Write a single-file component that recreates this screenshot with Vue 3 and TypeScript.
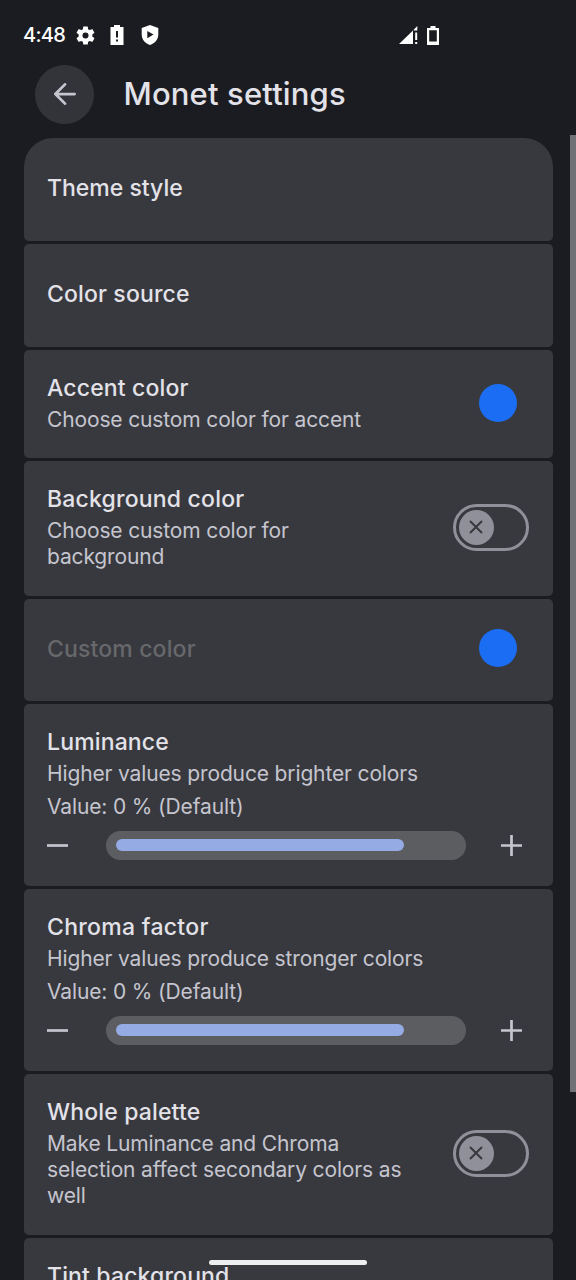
<script setup lang="ts">
type Kind = 'plain' | 'swatch' | 'toggle' | 'slider'

interface Setting {
  id: string
  title: string
  kind: Kind
  summary?: string[]
  value?: string
  level?: number
  disabled?: boolean
}

const settings: Setting[] = [
  { id: 'theme', title: 'Theme style', kind: 'plain' },
  { id: 'source', title: 'Color source', kind: 'plain' },
  { id: 'accent', title: 'Accent color', kind: 'swatch', summary: ['Choose custom color for accent'] },
  { id: 'background', title: 'Background color', kind: 'toggle', summary: ['Choose custom color for', 'background'] },
  { id: 'custom', title: 'Custom color', kind: 'swatch', disabled: true },
  { id: 'luminance', title: 'Luminance', kind: 'slider', summary: ['Higher values produce brighter colors'], value: 'Value: 0 % (Default)', level: 84.7 },
  { id: 'chroma', title: 'Chroma factor', kind: 'slider', summary: ['Higher values produce stronger colors'], value: 'Value: 0 % (Default)', level: 84.7 },
  { id: 'palette', title: 'Whole palette', kind: 'toggle', summary: ['Make Luminance and Chroma', 'selection affect secondary colors as', 'well'] },
  { id: 'tint', title: 'Tint background', kind: 'plain' },
]
</script>

<template>
  <div class="screen">
    <div class="status">
      <span class="clock">4:48</span>
      <svg class="gear" viewBox="2 2 20 20">
        <path fill-rule="evenodd" d="M19.14 12.94c.04-.3.06-.61.06-.94s-.02-.64-.07-.94l2.03-1.58a.49.49 0 0 0 .12-.61l-1.92-3.32a.49.49 0 0 0-.59-.22l-2.39.96a7 7 0 0 0-1.62-.94l-.36-2.54A.48.48 0 0 0 13.92 2.4h-3.84a.48.48 0 0 0-.48.41l-.36 2.54a7.4 7.4 0 0 0-1.62.94l-2.39-.96a.48.48 0 0 0-.59.22L2.72 8.87a.48.48 0 0 0 .12.61l2.03 1.58a6 6 0 0 0 0 1.88l-2.03 1.58a.49.49 0 0 0-.12.61l1.92 3.32c.12.22.37.29.59.22l2.39-.96c.5.38 1.03.7 1.62.94l.36 2.54c.05.24.24.41.48.41h3.84c.24 0 .44-.17.48-.41l.36-2.54a7 7 0 0 0 1.62-.94l2.39.96c.22.08.47 0 .59-.22l1.92-3.32a.48.48 0 0 0-.12-.61zM12 15.2a3.2 3.2 0 1 1 0-6.4 3.2 3.2 0 0 1 0 6.4z" />
      </svg>
      <svg class="alert" viewBox="0 0 14 20">
        <path fill-rule="evenodd" d="M4 0h6v2h3.500v18H.5V2H4zM6 6v6.500h2V6zM6 14.500v2h2v-2z" />
      </svg>
      <svg class="shield" viewBox="0 0 18 20">
        <path fill-rule="evenodd" d="M9 0l8.300 3v6.500c0 5-3.300 8.800-8.300 10.500C4 18.300.7 14.500.7 9.500V3zM6.300 6v7.200L12.500 9.600z" />
      </svg>
      <svg class="signal" viewBox="0 0 19 19">
        <path d="M0 18L14 4.500V18zM14.700 4.500V3.700L18.300 0v4.500zM16.200 6.500h2v7.500h-2zM16.200 16h2v2h-2z" />
      </svg>
      <svg class="battery" viewBox="0 0 12 19">
        <path fill-rule="evenodd" d="M3.500 0h5v2H12v17H0V2h3.500zM2.200 4.200v11.300h7.600V4.200z" />
      </svg>
    </div>

    <header class="bar">
      <button class="back" aria-label="Back">
        <svg viewBox="0 0 24 24"><path d="M22.500 12H2M12 1.500L1.500 12 12 22.500" /></svg>
      </button>
      <h1>Monet settings</h1>
    </header>

    <main class="list">
      <section v-for="s in settings" :key="s.id" class="card" :class="[s.id, s.kind, { disabled: s.disabled }]">
        <div class="body">
          <div class="text">
            <h2>{{ s.title }}</h2>
            <p v-if="s.summary" class="summary">
              <span v-for="line in s.summary" :key="line">{{ line }}</span>
            </p>
            <p v-if="s.value" class="value">{{ s.value }}</p>
          </div>
          <div v-if="s.kind === 'swatch'" class="dot"></div>
          <div v-if="s.kind === 'toggle'" class="switch">
            <div class="thumb">
              <svg viewBox="0 0 14 14"><path d="M1 1L13 13M13 1L1 13" /></svg>
            </div>
          </div>
        </div>
        <div v-if="s.kind === 'slider'" class="control">
          <svg class="sign" viewBox="0 0 21 21"><path d="M0 10.500H21" /></svg>
          <div class="track"><div class="fill" :style="{ width: s.level + '%' }"></div></div>
          <svg class="sign" viewBox="0 0 21 21"><path d="M0 10.500H21M10.500 0V21" /></svg>
        </div>
      </section>
    </main>

    <div class="scrollbar"></div>
    <div class="home"></div>
  </div>
</template>

<style>
body { background: #1b1c21; }
</style>

<style scoped>
.screen {
  position: relative;
  width: 576px;
  height: 1280px;
  overflow: hidden;
  background: #1b1c21;
  color: #e3e2e9;
  font-family: Inter, Roboto, sans-serif;
}
.status {
  display: flex;
  align-items: center;
  height: 60px;
  padding: 10px 0 0 23px;
  box-sizing: border-box;
  color: #fff;
}
.status svg { fill: #fff; flex: none; }
.clock { width: 52.5px; font-size: 20px; font-weight: 500; line-height: 24px; letter-spacing: -0.7px; }
.gear { width: 19px; height: 19px; }
.alert { width: 14px; height: 20px; margin-left: 15.500px; }
.shield { width: 18px; height: 20px; margin-left: 17px; }
.signal { width: 19px; height: 19px; margin-left: 239.500px; }
.battery { width: 12px; height: 19px; margin-left: 9px; }
.bar {
  display: flex;
  align-items: center;
  height: 68px;
  padding-left: 35px;
}
.back {
  display: flex;
  align-items: center;
  justify-content: center;
  width: 59px;
  height: 59px;
  padding: 0;
  border: 0;
  border-radius: 50%;
  background: #333439;
}
.back svg { width: 22px; height: 22px; fill: none; stroke: #c4c5d0; stroke-width: 3; stroke-linecap: round; stroke-linejoin: round; }
h1 { margin: 0 0 0 29.500px; font-size: 31px; font-weight: 500; line-height: 40px; letter-spacing: 0.15px; white-space: nowrap; }
.list {
  display: flex;
  flex-direction: column;
  gap: 3px;
  margin: 10px 23.500px 0;
}
.card {
  box-sizing: border-box;
  flex: none;
  height: 103px;
  padding: 23px 24px 0 23.500px;
  border-radius: 5px;
  background: #38393e;
}
.card.theme { border-radius: 29px 29px 5px 5px; }
.card.theme, .card.source, .card.custom { padding-top: 35px; }
.card.accent { height: 108px; }
.card.background { height: 135px; }
.card.custom { height: 102px; }
.card.slider { height: 182px; }
.card.palette { height: 161px; }
.body { display: flex; justify-content: space-between; }
h2 { margin: 0; font-size: 23px; font-weight: 500; line-height: 30px; letter-spacing: 0.15px; white-space: nowrap; }
.theme h2 { letter-spacing: 0; }
.background h2 { letter-spacing: 0.2px; }
.chroma h2 { letter-spacing: 0.3px; }
.summary, .value { margin: 4px 0 0; font-size: 21px; line-height: 26px; letter-spacing: -0.14px; color: #c5c5cf; white-space: nowrap; }
.summary span { display: block; }
.value { margin-top: 6.500px; }
.disabled h2 { color: #67686c; }
.dot { width: 38px; height: 38px; margin: 10.500px 11.500px 0 0; border-radius: 50%; background: #1b6ef3; }
.custom .dot { margin-top: -5px; }
.switch {
  box-sizing: border-box;
  display: flex;
  align-items: center;
  width: 76px;
  height: 47px;
  margin-top: 19.500px;
  padding-left: 3px;
  border: 3px solid #8f9099;
  border-radius: 24px;
}
.palette .switch { margin-top: 32.500px; }
.thumb { display: flex; align-items: center; justify-content: center; width: 35px; height: 35px; border-radius: 50%; background: #8f9099; }
.thumb svg { width: 14px; height: 14px; fill: none; stroke: #38393e; stroke-width: 2; }
.control { display: flex; align-items: center; height: 29px; margin-top: 11px; }
.sign { width: 21px; height: 21px; stroke: #c5c5cf; stroke-width: 2.700; flex: none; }
.track {
  box-sizing: border-box;
  width: 360px;
  height: 29px;
  margin: 0 35px 0 38px;
  padding: 8.500px 10px;
  border-radius: 15px;
  background: #5c5d61;
}
.fill { height: 12px; border-radius: 6px; background: #94abe3; }
.scrollbar { position: absolute; top: 135px; right: 0; width: 6px; height: 957px; background: #6f7075; }
.home { position: absolute; left: 209px; top: 1259.500px; width: 158px; height: 5.500px; border-radius: 3px; background: #eeeeef; }
</style>
